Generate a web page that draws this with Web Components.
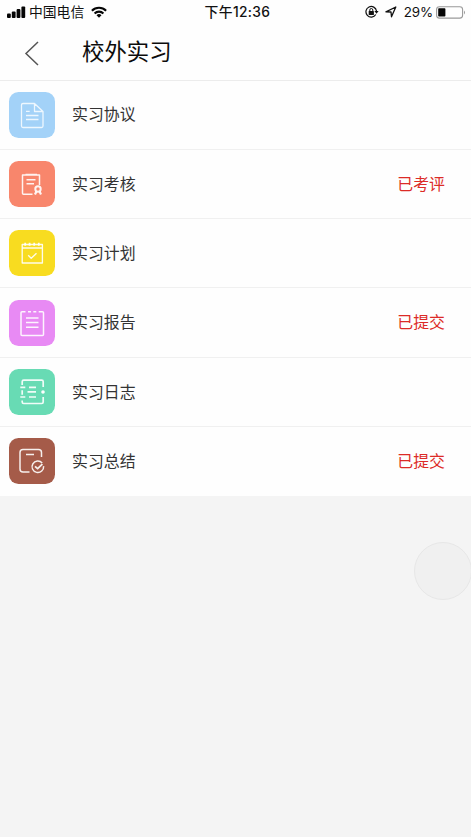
<!DOCTYPE html>
<html lang="zh-CN">
<head>
<meta charset="utf-8">
<title>校外实习</title>
<style>
html,body{margin:0;height:100%}
body{background:#f4f4f4;font-family:"Liberation Sans","Noto Sans CJK SC",sans-serif;overflow:hidden}
</style>
</head>
<body>
<internship-app></internship-app>
<script>
const define = (name, html, setup) => customElements.define(name, class extends HTMLElement {
  constructor() {
    super();
    this.attachShadow({mode: 'open'}).innerHTML = html;
  }
  connectedCallback() { if (setup) setup(this, this.shadowRoot); }
});

define('status-bar', `
<style>
:host{display:grid;grid-template-columns:1fr auto 1fr;align-items:center;height:24px;padding:0 5px 0 7px;box-sizing:border-box;color:#111;font:13.8px/24px Inter,"Noto Sans CJK SC",sans-serif}
div{display:flex;align-items:center;white-space:nowrap}
.r{justify-content:flex-end}
svg{display:block;flex:none}
.t{font-weight:500;font-size:13.8px;letter-spacing:.35px;padding-left:2px}
.p{font-size:13.4px;margin:0 3px 0 7px;letter-spacing:-.1px}
</style>
<div>
<svg width="19" height="13" fill="#050505"><rect y="7.5" width="3.8" height="4.5" rx="1"/><rect x="4.8" y="5.5" width="3.8" height="6.5" rx="1"/><rect x="9.6" y="3" width="3.8" height="9" rx="1"/><rect x="14.4" y=".5" width="3.8" height="11.5" rx="1"/></svg>
<span style="margin:0 7px 0 3px">中国电信</span>
<svg width="16" height="12" viewBox="0 0 16 12"><g fill="none" stroke="#050505" stroke-width="2.1"><path d="M.9 4.7a10 10 0 0 1 14.2 0"/><path d="M3.6 7.5a6.2 6.2 0 0 1 8.8 0"/></g><path d="M5.5 9.3a3.6 3.6 0 0 1 5 0L8 11.8z" fill="#050505"/></svg>
</div>
<div class="t">下午12:36</div>
<div class="r">
<svg width="14" height="14" viewBox="0 0 14 14"><path d="M10.8 9.5A5.3 5.3 0 1 1 11.5 6" fill="none" stroke="#111" stroke-width="1.2"/><path d="M9.4 6h4.2l-2.1 2.8z" fill="#111"/><rect x="3.7" y="6" width="5.2" height="4" rx=".5" fill="#111"/><path d="M4.8 6V5a1.5 1.5 0 0 1 3 0v1" fill="none" stroke="#111"/></svg>
<svg style="margin-left:6px" width="12" height="12" viewBox="0 0 12 12"><path d="M.9 5.8 10.8 1 6.5 10.8 6 6z" fill="none" stroke="#111" stroke-width="1.3" stroke-linejoin="round"/></svg>
<span class="p">29%</span>
<svg width="30" height="13" viewBox="0 0 30 13"><rect x=".6" y=".7" width="26" height="11.4" rx="2.8" fill="none" stroke="#999" stroke-width="1.1"/><rect x="2.2" y="2.3" width="7.2" height="8.2" rx=".8" fill="#050505"/><path d="M28 4.4q2 2 0 4z" fill="#999"/></svg>
</div>`);

define('nav-bar', `
<style>
:host{display:flex;height:56.6px;box-sizing:border-box;padding-left:24px;color:#0c0c0c;border-bottom:1px solid #ececec}
svg{display:block;margin-top:17px}
h1{font-size:22.4px;font-weight:400;line-height:32px;margin:13px 0 0 42px}
</style>
<svg width="16" height="26" viewBox="0 0 16 26"><path d="M14 1 2 12.5 14 24" fill="none" stroke="#555" stroke-width="1.5"/></svg>
<h1><slot></slot></h1>`);

const icons = {
  agreement: ['#a3d2f8', '<g stroke-width="1.3" opacity=".9"><path d="M14 11.5h11.5l8.5 8v14.5a1.5 1.5 0 0 1-1.5 1.5H14a1.5 1.5 0 0 1-1.5-1.5V13a1.5 1.5 0 0 1 1.5-1.5zM25.5 11.5v8H34M17 19.4h3.7M17 23.5h12.5M17 27.5h12.5"/></g>'],
  review: ['#f8866c', '<path d="M23.5 33.2H14.5a1 1 0 0 1-1-1V14h17V24M16.5 13.5h11.5M17.5 18.8h9M17.5 22.8h7.5"/><circle cx="29" cy="28" r="2.7" stroke-width="2"/><path d="m27.4 30.5-1.4 3M30.6 30.5l1.4 3" stroke-width="2.2"/>'],
  plan: ['#f8dc20', '<g stroke-width="1.35"><path d="M13.2 14.5h20.2v18.5H13.2zM13.2 18h20.2"/><path d="m19.2 25.3 3 3 5.3-5"/></g><path d="M16.2 12.8v3M20.6 12.8v3M25.2 12.8v3M29.8 12.8v3" stroke-width="1.8"/>'],
  report: ['#e88af4', '<path d="M16.5 11.8H13a1 1 0 0 0-1 1v21.7a1 1 0 0 0 1 1h20.5a1 1 0 0 0 1-1V12.8a1 1 0 0 0-1-1h-3.8M19 11.8h3M24.3 11.8h3M17 18h12.5M17 22.6h12.5M17 27.2h12.5"/>'],
  journal: ['#68dbb4', '<g stroke-width="1.7"><path d="M13.2 16v-3.3a1.5 1.5 0 0 1 1.5-1.5h18a1.5 1.5 0 0 1 1.5 1.5V18M34.2 28v5a1.5 1.5 0 0 1-1.5 1.5h-18a1.5 1.5 0 0 1-1.5-1.5v-1.5M13.2 21.3v4.5M11.3 18.3h5M11.3 28h5M20 18.3h7M18.5 22.8h8.5M20 28h7"/></g><circle cx="34" cy="23" r="1.8" fill="#fff" stroke="none"/>'],
  summary: ['#a55b49', '<path d="M20.5 34H14a3 3 0 0 1-3-3V14.5a3 3 0 0 1 3-3h15.5a3 3 0 0 1 3 3V19M17 16.5h8"/><path d="M33.2 24.9a5.8 5.8 0 1 0 1.4 3.2"/><path d="m26 28.3 2.6 2.4 4.8-4.6" stroke-width="1.8"/>']
};

define('list-row', `
<style>
:host{display:flex;align-items:center;box-sizing:border-box;height:69.3px;padding:0 26px 0 9px;background:#fefefe;border-bottom:1px solid #f0f0f0;font-size:15.9px;line-height:24px;color:#333}
:host(:last-child){border-bottom-color:transparent}
svg{display:block;width:46px;height:46px;border-radius:9.5px;flex:none;fill:none;stroke:#fff;stroke-width:1.5;stroke-opacity:.9;stroke-linecap:butt;stroke-linejoin:round}
.label{flex:1;margin-left:17px}
.label,.status{padding-top:1.4px}
.status{color:#dc2b27}
</style>
<svg viewBox="0 0 46 46"></svg>
<span class="label"><slot></slot></span>
<span class="status"><slot name="status"></slot></span>`, (host, root) => {
  const [colour, shape] = icons[host.getAttribute('icon')];
  const svg = root.querySelector('svg');
  svg.style.background = colour;
  svg.innerHTML = shape;
});

define('floating-button', `
<style>
:host{display:block;box-sizing:border-box;width:58px;height:58px;border-radius:50%;background:#f0f0f0;border:1px solid #e7e7e7}
</style>`);

define('internship-app', `
<style>
:host{display:block;position:relative;height:100vh;background:#f4f4f4}
header{background:#fefefe}
floating-button{position:absolute;right:-1px;top:542px}
</style>
<header><status-bar></status-bar><nav-bar>校外实习</nav-bar></header>
<main>
<list-row icon="agreement">实习协议</list-row>
<list-row icon="review">实习考核<span slot="status">已考评</span></list-row>
<list-row icon="plan">实习计划</list-row>
<list-row icon="report">实习报告<span slot="status">已提交</span></list-row>
<list-row icon="journal">实习日志</list-row>
<list-row icon="summary">实习总结<span slot="status">已提交</span></list-row>
</main>
<floating-button></floating-button>`);
</script>
</body>
</html>
